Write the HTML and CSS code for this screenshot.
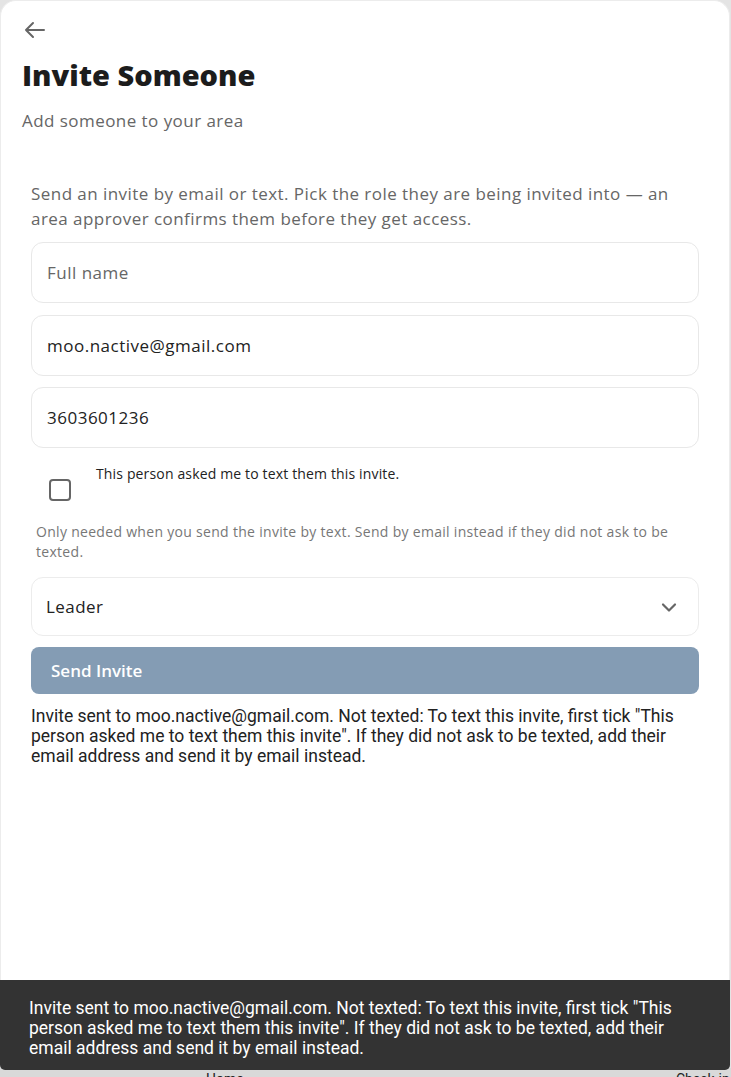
FILE: index.html
```html
<!DOCTYPE html>
<html lang="en">
<head>
    <meta charset="UTF-8">
    <title>Invite Someone</title>
    <link rel="stylesheet" href="styles.css">
</head>
<body>
    <div class="sheet">
        <button class="back-btn" aria-label="Back">
            <svg width="24" height="24" viewBox="0 0 24 24"><path d="M21 12H3M10 5l-7 7 7 7" fill="none" stroke="#666" stroke-width="2" stroke-linecap="round" stroke-linejoin="round"/></svg>
        </button>
        <h1 class="page-title">Invite Someone</h1>
        <p class="page-sub">Add someone to your area</p>

        <div class="invite-form">
            <p class="intro">Send an invite by email or text. Pick the role they are being invited into — an area approver confirms them before they get access.</p>

            <input class="field" type="text" placeholder="Full name">
            <input class="field" type="email" value="moo.nactive@gmail.com">
            <input class="field" type="tel" value="3603601236">

            <label class="consent">
                <span class="check-wrap"><span class="check-box"></span></span>
                <span class="consent-text">This person asked me to text them this invite.</span>
            </label>
            <p class="hint">Only needed when you send the invite by text. Send by email instead if they did not ask to be texted.</p>

            <div class="select">
                <span>Leader</span>
                <svg width="24" height="24" viewBox="0 0 24 24"><path d="M6 9.5l6 6 6-6" fill="none" stroke="#666" stroke-width="2.2" stroke-linecap="round" stroke-linejoin="round"/></svg>
            </div>

            <button class="submit-btn">Send Invite</button>

            <p class="result">Invite sent to moo.nactive@gmail.com. Not texted: To text this invite, first tick "This person asked me to text them this invite". If they did not ask to be texted, add their email address and send it by email instead.</p>
        </div>
    </div>

    <nav class="tabbar">
        <span class="tab tab-home">Home</span>
        <span class="tab tab-check">Check-in</span>
    </nav>

    <div class="toast">Invite sent to moo.nactive@gmail.com. Not texted: To text this invite, first tick "This person asked me to text them this invite". If they did not ask to be texted, add their email address and send it by email instead.</div>
</body>
</html>
```

FILE: styles.css
```css
body {
    margin: 0;
    background: #e4e4e4;
    font-family: "Open Sans", "Noto Sans", sans-serif;
    color: #222;
}
.sheet {
    min-height: 1068px;
    box-sizing: border-box;
    margin-right: 1px;
    padding: 16px 21px 0;
    background: #fff;
    border: 1px solid #ececec;
    border-bottom: none;
    border-radius: 16px 16px 0 0;
}
.back-btn {
    display: flex;
    padding: 0;
    margin: 1px 0 0 1px;
    border: none;
    background: none;
}
.page-title {
    margin: 15px 0 0;
    font-size: 29px;
    line-height: 36px;
    font-weight: 800;
    color: #1c1c1c;
}
.page-sub {
    margin: 16px 0 0;
    font-size: 17px;
    line-height: 24px;
    letter-spacing: 0.45px;
    color: #666;
}
.invite-form {
    display: flex;
    flex-direction: column;
    padding: 0 9px;
    margin-top: 48px;
}
.intro {
    margin: 0 0 11px;
    font-size: 17px;
    line-height: 25px;
    letter-spacing: 0.45px;
    color: #666;
}
.field {
    height: 61px;
    box-sizing: border-box;
    margin-bottom: 11.5px;
    padding: 0 15px;
    border: 1px solid #e8e8e8;
    border-radius: 12px;
    font-family: inherit;
    font-size: 17px;
    letter-spacing: 0.5px;
    color: #222;
    outline: none;
}
.field::placeholder {
    color: #666;
}
.consent {
    display: flex;
    align-items: flex-start;
}
.check-wrap {
    display: flex;
    width: 48px;
    height: 48px;
    margin: 6px 12px 0 5px;
    align-items: center;
    justify-content: center;
}
.check-box {
    width: 18px;
    height: 18px;
    border: 2px solid #666;
    border-radius: 4px;
}
.consent-text {
    margin-top: 4px;
    font-size: 14px;
    line-height: 20px;
    letter-spacing: 0.15px;
    color: #222;
}
.hint {
    margin: 8.5px 0 16px 5px;
    font-size: 14px;
    line-height: 19.5px;
    letter-spacing: 0.3px;
    color: #777;
}
.select {
    display: flex;
    align-items: center;
    justify-content: space-between;
    height: 59px;
    box-sizing: border-box;
    padding: 0 17px 0 14px;
    border: 1px solid #ececec;
    border-radius: 12px;
    font-size: 17px;
    letter-spacing: 0.45px;
}
.submit-btn {
    height: 47px;
    margin-top: 11px;
    padding: 0 20px;
    text-align: left;
    border: none;
    border-radius: 8px;
    background: #849cb4;
    color: #fff;
    font-family: inherit;
    font-size: 17px;
    font-weight: 600;
}
.result {
    margin: 12px 0 0;
    font-family: "Roboto", sans-serif;
    font-size: 17.5px;
    line-height: 20px;
    color: #222;
}
.tabbar {
    position: relative;
    height: 56px;
    background: #d9d9d9;
    font-family: "Roboto", sans-serif;
    font-size: 14px;
}
.tab {
    position: absolute;
    top: 3px;
}
.tab-home {
    left: 206px;
}
.tab-check {
    left: 676px;
}
.toast {
    position: fixed;
    left: 0;
    right: 1px;
    bottom: 7px;
    box-sizing: border-box;
    height: 90px;
    padding: 18px 29px 0;
    background: #333;
    border-radius: 0 0 5px 5px;
    color: #fff;
    font-family: "Roboto", sans-serif;
    font-size: 17.5px;
    line-height: 20px;
}
```
